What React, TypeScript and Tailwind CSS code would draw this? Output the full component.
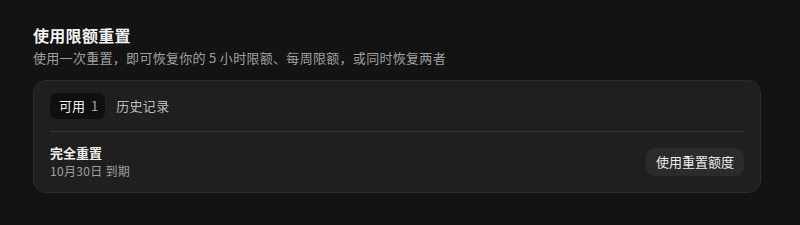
export default function App() {
  return (
    <div
      className="w-[800px] h-[225px] bg-[#131313] text-white"
      style={{ fontFamily: '"Noto Sans CJK SC", "Noto Sans", sans-serif' }}
    >
      <div className="pl-[33px] pr-[39px] pt-[24px]">
        <div className="text-[16px] font-semibold leading-[22px] tracking-[0.3px] text-[#f2f2f2]">使用限额重置</div>
        <div className="mt-[2px] text-[13px] leading-[20px] tracking-[0.3px] text-[#a0a0a0]">
          使用一次重置，即可恢复你的 5 小时限额、每周限额，或同时恢复两者
        </div>
        <div className="mt-[12px] rounded-[13px] border border-[#2c2c2c] bg-[#1f1f1f] px-[16px] pt-[12px] pb-[12px]">
          <div className="flex items-center gap-[11px] pb-[12px] border-b border-[#333333]">
            <div className="flex items-center gap-[6px] h-[26px] pl-[9px] pr-[7px] rounded-[7px] bg-[#0f0f0f] text-[13px]">
              <span className="text-[#f2f2f2]">可用</span>
              <span className="text-[#a8a8a8]">1</span>
            </div>
            <div className="text-[13px] tracking-[0.3px] text-[#bdbdbd]">历史记录</div>
          </div>
          <div className="flex items-center justify-between pt-[12px]">
            <div>
              <div className="text-[13px] font-semibold leading-[18px] text-[#f0f0f0]">完全重置</div>
              <div className="text-[12px] leading-[18px] tracking-[0.3px] text-[#a0a0a0]">10月30日 到期</div>
            </div>
            <button className="h-[28px] px-[10px] rounded-[9px] bg-[#2b2b2b] text-[13px] text-[#ececec]">
              使用重置额度
            </button>
          </div>
        </div>
      </div>
    </div>
  );
}
